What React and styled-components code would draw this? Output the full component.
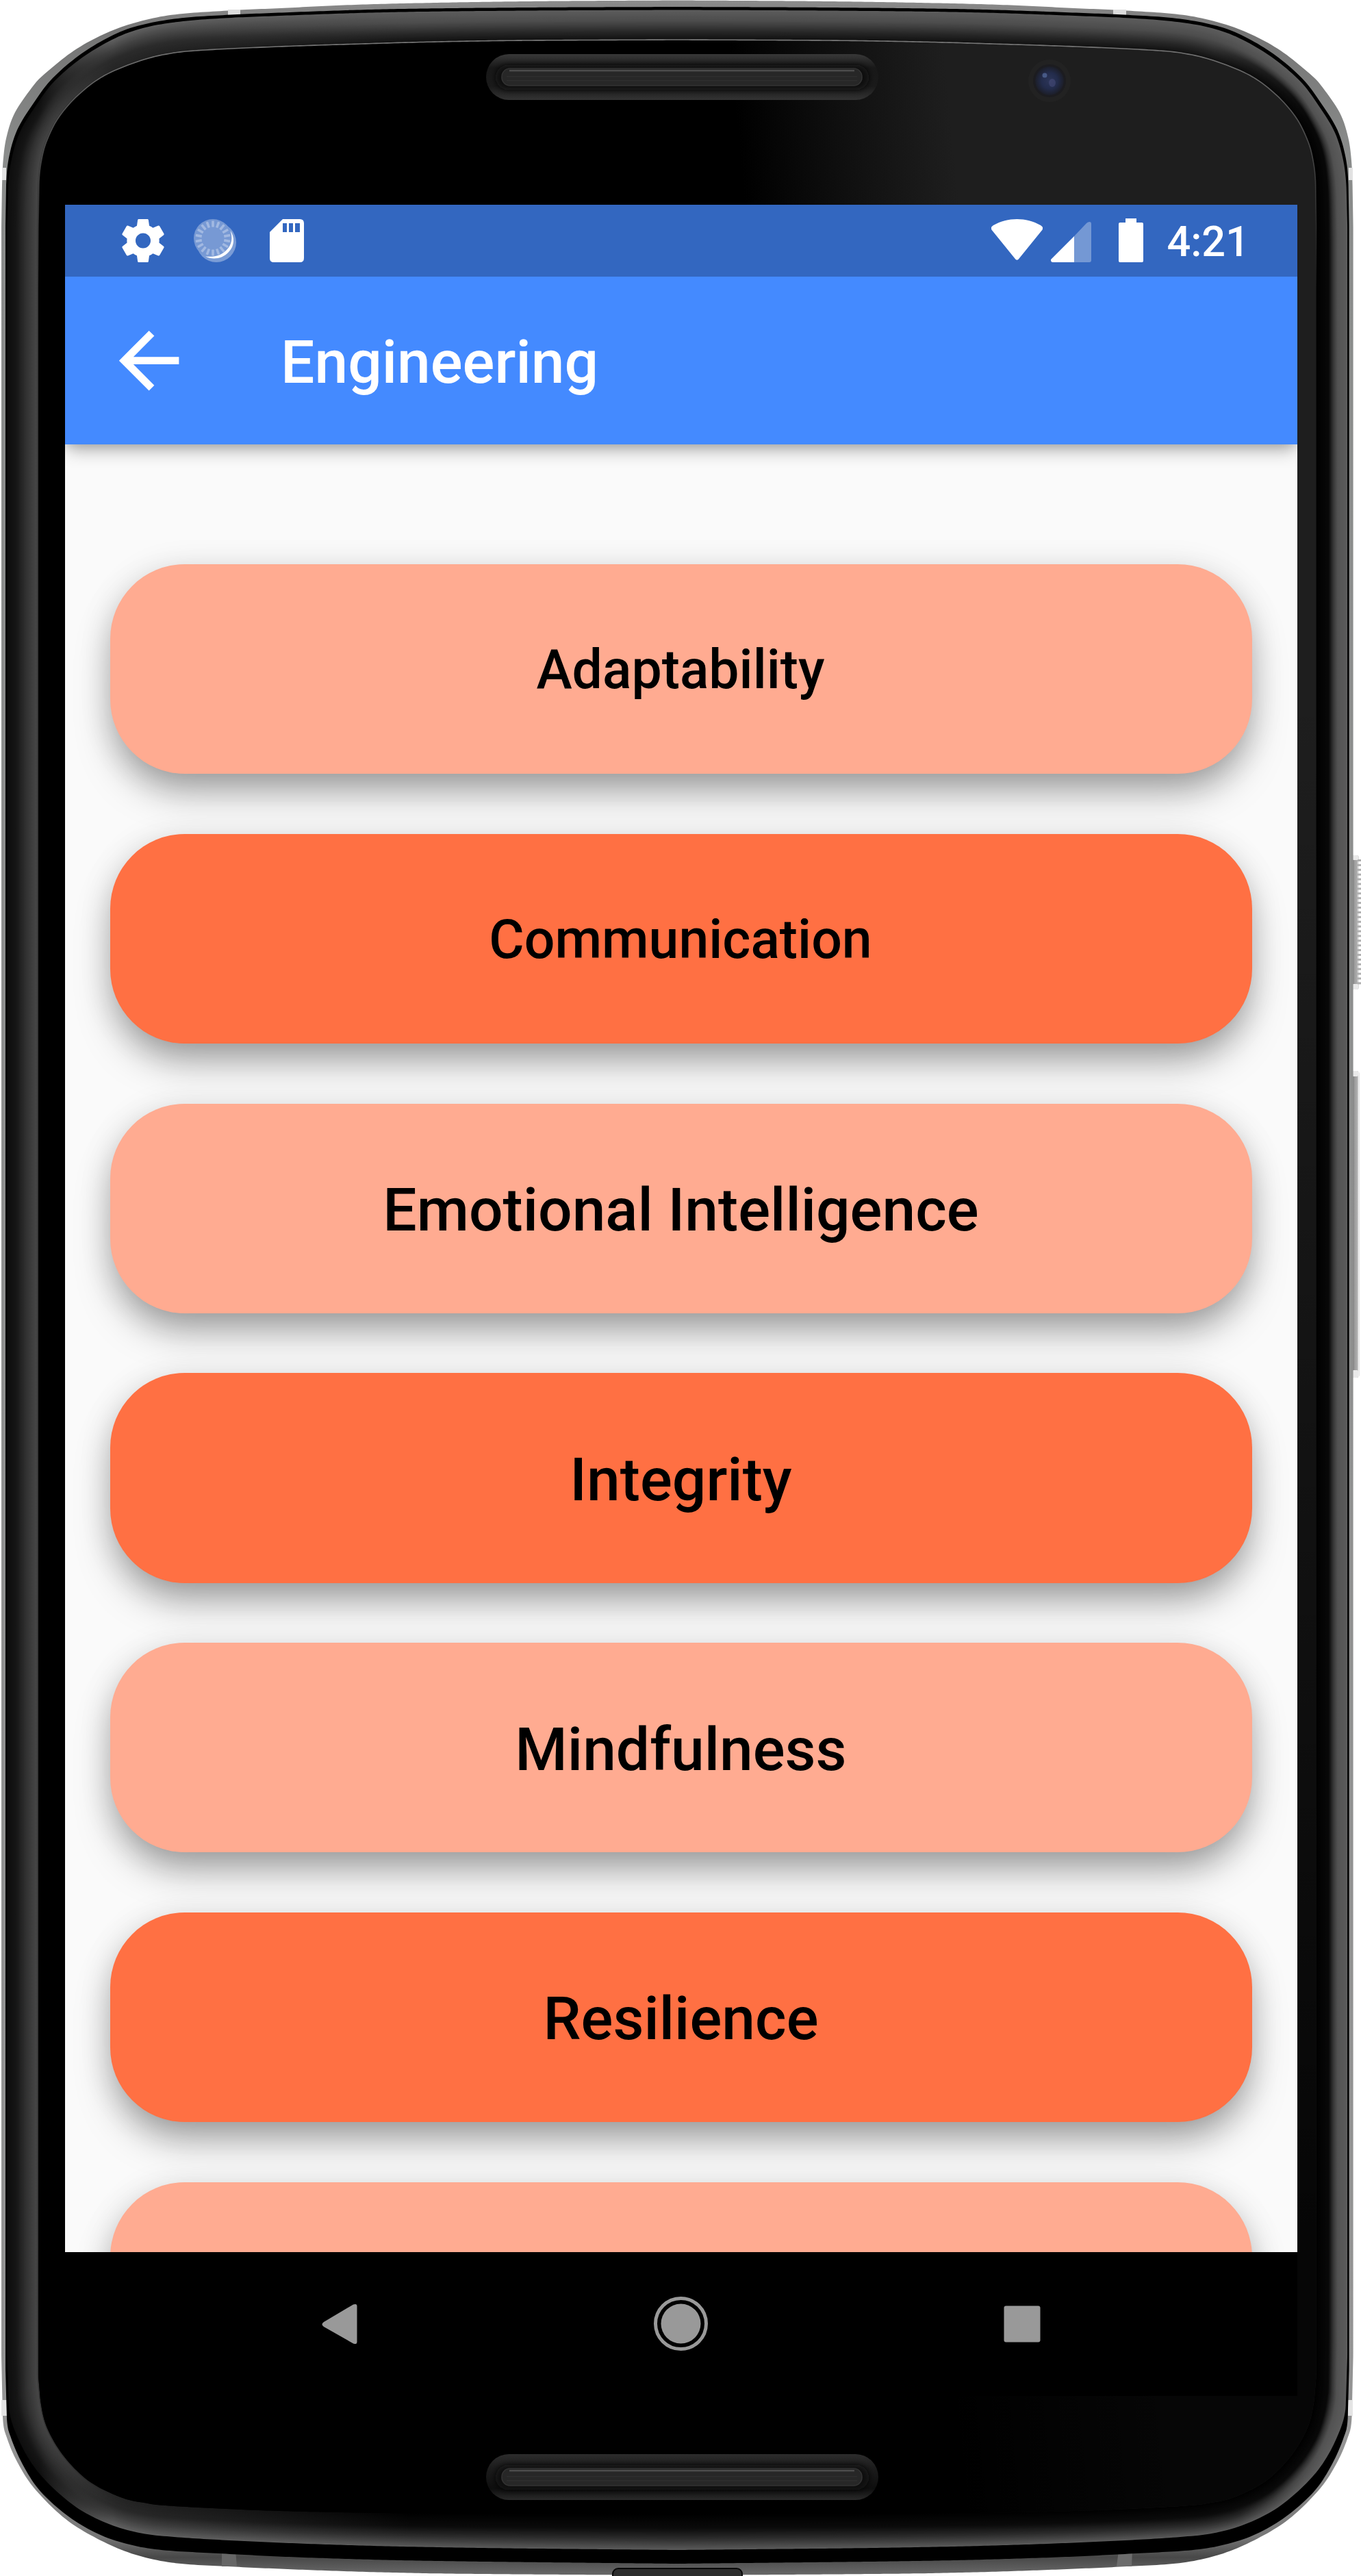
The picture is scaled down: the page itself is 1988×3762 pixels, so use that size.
import React from "react";
import styled, { createGlobalStyle } from "styled-components";

const GlobalStyle = createGlobalStyle`
  body { margin: 0; background: #fff; }
  * { box-sizing: border-box; }
`;

/* ---------- geometry of the handset ---------- */

const CX = 989.3;

const contours = {
  rim: {
    top: [[CX, 0.5], [765, 2], [548, 6], [408, 12], [332, 15.5], [249, 22], [191, 35], [147, 52], [105, 76], [64, 109], [48, 126], [22, 164], [10, 198], [5, 230], [3, 270], [2, 330], [2, 1881]],
    bottom: [[2, 1881], [2, 3440], [4, 3530], [10, 3560], [26, 3597], [51, 3635], [96, 3679], [147, 3710], [198, 3731], [255, 3743], [332, 3748], [446, 3753], [574, 3757], [702, 3759], [CX, 3761]],
  },
  groove: {
    top: [[CX, 10], [770, 11], [561, 13.5], [383, 19.5], [319, 22.5], [268, 26], [217, 34], [172, 48], [121, 77], [77, 114], [48, 152], [25, 190], [13, 230], [9, 270], [8, 330], [8, 1881]],
    bottom: [[8, 1881], [8, 3460], [10, 3533], [16, 3560], [32, 3597], [57, 3636], [96, 3672], [140, 3699], [185, 3715], [236, 3724], [319, 3729], [446, 3735], [638, 3740], [CX, 3744]],
  },
  bevel: {
    top: [[CX, 14.5], [770, 15.5], [561, 18], [383, 24], [319, 27], [268, 31], [217, 39], [172, 54], [123, 82], [80, 118], [52, 155], [29, 193], [17, 232], [12, 272], [10.5, 330], [10.5, 1881]],
    bottom: [[10.5, 1881], [10.5, 3440], [13, 3517], [26, 3560], [48, 3600], [77, 3633], [115, 3664], [159, 3686], [204, 3699], [255, 3705], [357, 3711], [510, 3717], [702, 3721], [CX, 3724]],
  },
  glass: {
    top: [[CX, 58], [770, 59], [638, 61], [529, 64], [408, 68], [300, 73], [249, 78], [204, 89], [153, 110], [115, 138], [86, 171], [69, 204], [61, 232], [57, 266], [56, 330], [56, 1881]],
    bottom: [[56, 1881], [56, 3470], [59, 3505], [67, 3541], [86, 3577], [112, 3608], [140, 3630], [179, 3648], [210, 3655], [255, 3660], [408, 3667], [638, 3671], [CX, 3673]],
  },
};

function resample(points, count) {
  const lengths = [0];
  for (let i = 1; i < points.length; i++) {
    lengths.push(lengths[i - 1] + Math.hypot(points[i][0] - points[i - 1][0], points[i][1] - points[i - 1][1]));
  }
  const total = lengths[lengths.length - 1];
  const out = [];
  let k = 1;
  for (let i = 0; i <= count; i++) {
    const d = (total * i) / count;
    while (k < points.length - 1 && lengths[k] < d) k++;
    const f = (d - lengths[k - 1]) / (lengths[k] - lengths[k - 1]);
    out.push([
      points[k - 1][0] + (points[k][0] - points[k - 1][0]) * f,
      points[k - 1][1] + (points[k][1] - points[k - 1][1]) * f,
    ]);
  }
  return out;
}

/* Rounds a list of points off, leaving the long straight sides straight. */
function smooth(points) {
  const out = [points[0]];
  const far = (a, b) => Math.hypot(a[0] - b[0], a[1] - b[1]) > 400;
  for (let i = 0; i < points.length - 1; i++) {
    const p1 = points[i];
    const p2 = points[i + 1];
    const p0 = points[i - 1] || p1;
    const p3 = points[i + 2] || p2;
    const straight = far(p1, p2) || far(p0, p1) || far(p2, p3);
    for (let s = 1; s <= 8; s++) {
      const t = s / 8;
      const at = (a, b, c, d) =>
        straight
          ? b + (c - b) * t
          : 0.5 * (2 * b + (c - a) * t + (2 * a - 5 * b + 4 * c - d) * t * t + (3 * b - a - 3 * c + d) * t * t * t);
      out.push([at(p0[0], p1[0], p2[0], p3[0]), at(p0[1], p1[1], p2[1], p3[1])]);
    }
  }
  return out;
}

function prepare({ top, bottom }) {
  return [...resample(smooth(top), 500), ...resample(smooth(bottom), 500)];
}

function closed(half) {
  const f = ([x, y]) => `${x.toFixed(2)} ${y.toFixed(2)}`;
  const right = half.map(([x, y]) => [2 * CX - x, y]).reverse();
  return `M${half.map(f).join("L")}L${right.map(f).join("L")}Z`;
}

const halves = Object.fromEntries(Object.entries(contours).map(([k, v]) => [k, prepare(v)]));
const outline = Object.fromEntries(Object.entries(halves).map(([k, v]) => [k, closed(v)]));

const ramp = (stops, t) => {
  for (let i = 1; i < stops.length; i++) {
    if (t <= stops[i][0]) {
      const f = (t - stops[i - 1][0]) / (stops[i][0] - stops[i - 1][0]);
      return Math.round(stops[i - 1][1] + (stops[i][1] - stops[i - 1][1]) * f);
    }
  }
  return stops[stops.length - 1][1];
};
const grey = (v) => `rgb(${v},${v},${v})`;

const LEFT = [[0, 14], [0.25, 20], [0.6, 50], [0.92, 70], [1, 40]];
const CORNER = [[0, 95], [0.3, 66], [0.6, 42], [1, 36]];
const MIDDLE = [[0, 92], [0.35, 76], [0.7, 40], [1, 14]];
const RIGHT = [[0, 92], [0.3, 82], [0.45, 50], [0.58, 8], [1, 0]];
const BASE = [[0, 88], [0.3, 44], [0.6, 10], [1, 0]];

const STEPS = 26;
const rings = Array.from({ length: STEPS }, (_, i) => {
  const t = i / STEPS;
  const half = halves.bevel.map(([x, y], k) => [
    x + (halves.glass[k][0] - x) * t,
    y + (halves.glass[k][1] - y) * t,
  ]);
  return {
    d: closed(half),
    left: grey(ramp(LEFT, t)),
    corner: grey(ramp(CORNER, t)),
    middle: grey(ramp(MIDDLE, t)),
    right: grey(ramp(RIGHT, t)),
    base: grey(ramp(BASE, t)),
  };
});

function Grille({ y, id }) {
  return (
    <g>
      <rect x="710" y={y} width="573" height="67" rx="33.5" fill={`url(#${id})`} />
      <rect x="724" y={y + 16} width="545" height="36" rx="18" fill="#111" filter="url(#soften)" />
      <rect x="733" y={y + 21} width="526" height="25" rx="12" fill="#272727" stroke="#333" strokeWidth="1.6" />
      <rect x="744" y={y + 23} width="504" height="2.4" fill="#4c4c4c" />
      <rect x="740" y={y + 32} width="512" height="1.5" fill="#2e2e2e" />
      <rect x="740" y={y + 38} width="512" height="1.5" fill="#2e2e2e" />
    </g>
  );
}

function Handset() {
  const teeth = Array.from({ length: 27 }, (_, i) => 1255 + i * 6.9);
  return (
    <Shell viewBox="0 0 1988 3762" aria-hidden="true">
      <defs>
        <linearGradient id="metal" x1="0" y1="0" x2="0" y2="1">
          <stop offset="0" stopColor="#8c8c8c" />
          <stop offset="0.012" stopColor="#747474" />
          <stop offset="0.06" stopColor="#8a8c8b" />
          <stop offset="0.95" stopColor="#949494" />
          <stop offset="0.985" stopColor="#777" />
          <stop offset="0.993" stopColor="#484848" />
          <stop offset="1" stopColor="#6a6a6a" />
        </linearGradient>
        {rings.map((r, i) => (
          <React.Fragment key={i}>
            <linearGradient id={`u${i}`} gradientUnits="userSpaceOnUse" x1="8" y1="0" x2="1970" y2="0">
              <stop offset="0" stopColor={r.left} />
              <stop offset="0.025" stopColor={r.left} />
              <stop offset="0.08" stopColor={r.corner} />
              <stop offset="0.3" stopColor={r.middle} />
              <stop offset="0.9" stopColor={r.middle} />
              <stop offset="0.97" stopColor={r.right} />
              <stop offset="1" stopColor={r.right} />
            </linearGradient>
            <linearGradient id={`l${i}`} gradientUnits="userSpaceOnUse" x1="8" y1="0" x2="1970" y2="0">
              <stop offset="0" stopColor={r.left} />
              <stop offset="0.025" stopColor={r.left} />
              <stop offset="0.08" stopColor={r.corner} />
              <stop offset="0.3" stopColor={r.base} />
              <stop offset="0.92" stopColor={r.base} />
              <stop offset="0.98" stopColor={r.right} />
              <stop offset="1" stopColor={r.right} />
            </linearGradient>
          </React.Fragment>
        ))}
        <linearGradient id="glare" gradientUnits="userSpaceOnUse" x1="1090" y1="320" x2="1400" y2="290">
          <stop offset="0" stopColor="#000" />
          <stop offset="0.5" stopColor="#101010" />
          <stop offset="1" stopColor="#1e1e1e" />
        </linearGradient>
        <linearGradient id="fade" gradientUnits="userSpaceOnUse" x1="0" y1="1000" x2="0" y2="3250">
          <stop offset="0" stopColor="#000" stopOpacity="0" />
          <stop offset="1" stopColor="#000" stopOpacity="0.8" />
        </linearGradient>
        <linearGradient id="edge" gradientUnits="userSpaceOnUse" x1="0" y1="55" x2="0" y2="420">
          <stop offset="0" stopColor="#7a7a7a" />
          <stop offset="0.3" stopColor="#555" />
          <stop offset="1" stopColor="#555" stopOpacity="0" />
        </linearGradient>
        <linearGradient id="earpiece" x1="0" y1="0" x2="0" y2="1">
          <stop offset="0" stopColor="#383838" />
          <stop offset="0.3" stopColor="#181818" />
          <stop offset="0.7" stopColor="#1a1a1a" />
          <stop offset="1" stopColor="#333" />
        </linearGradient>
        <linearGradient id="loudspeaker" x1="0" y1="0" x2="0" y2="1">
          <stop offset="0" stopColor="#2c2c2c" />
          <stop offset="0.3" stopColor="#1c1c1c" />
          <stop offset="0.75" stopColor="#0e0e0e" />
          <stop offset="1" stopColor="#2a2a2a" />
        </linearGradient>
        <linearGradient id="key" x1="0" y1="0" x2="1" y2="0">
          <stop offset="0" stopColor="#6a6a6a" />
          <stop offset="0.35" stopColor="#9c9c9c" />
          <stop offset="0.75" stopColor="#b0b0b0" />
          <stop offset="0.9" stopColor="#f4f4f4" />
          <stop offset="1" stopColor="#c4c4c4" />
        </linearGradient>
        <radialGradient id="lens">
          <stop offset="0" stopColor="#2c3558" />
          <stop offset="0.55" stopColor="#232c4c" />
          <stop offset="1" stopColor="#1c1e28" />
        </radialGradient>
        <filter id="soften" x="-5%" y="-60%" width="110%" height="220%">
          <feGaussianBlur stdDeviation="4" />
        </filter>
      </defs>

      <rect x="1975" y="1249" width="10" height="196" rx="3" fill="url(#key)" />
      {teeth.map((y) => (
        <rect key={y} x="1983" y={y} width="5" height="3" fill="#b0b0b0" />
      ))}
      <rect x="1975" y="1249" width="9" height="7" rx="2" fill="#e9e9e9" />
      <rect x="1975" y="1437" width="9" height="8" rx="2" fill="#e9e9e9" />
      <rect x="1975" y="1564" width="10.5" height="448" rx="4" fill="url(#key)" />
      <rect x="1975" y="1564" width="9" height="8" rx="2" fill="#e9e9e9" />
      <rect x="1975" y="2001" width="9" height="11" rx="2" fill="#e9e9e9" />

      <path d={outline.rim} fill="url(#metal)" />
      <rect x="333" y="14" width="18" height="9" fill="#dcdcdc" />
      <rect x="1626" y="14" width="19" height="9" fill="#dcdcdc" />
      <rect x="3" y="245" width="6" height="18" fill="#e2e2e2" />
      <rect x="1970" y="245" width="6" height="18" fill="#e2e2e2" />
      <rect x="2" y="3505" width="8" height="23" fill="#e4e4e4" />
      <rect x="1969" y="3505" width="7" height="23" fill="#e4e4e4" />
      <path d="M324 3725H344L346 3748H324Z" fill="#666" />
      <path d="M1634 3725H1654L1653 3748H1631Z" fill="#6c6c6c" />
      <rect x="895" y="3751" width="189" height="22" rx="8" fill="#2e2e2e" stroke="#080808" strokeWidth="2" />

      <path d={outline.groove} fill="#000" />
      <svg x="0" y="0" width="1988" height="1881" viewBox="0 0 1988 1881">
        {rings.map((r, i) => (
          <path key={i} d={r.d} fill={`url(#u${i})`} />
        ))}
      </svg>
      <svg x="0" y="1881" width="1988" height="1881" viewBox="0 1881 1988 1881">
        {rings.map((r, i) => (
          <path key={i} d={r.d} fill={`url(#l${i})`} />
        ))}
      </svg>
      <path d={outline.glass} fill="url(#glare)" />
      <path d={outline.glass} fill="url(#fade)" />
      <path d={outline.glass} fill="none" stroke="url(#edge)" strokeWidth="1.6" />

      <Grille y={79} id="earpiece" />
      <Grille y={3584} id="loudspeaker" />

      <circle cx="1533" cy="118" r="31" fill="#222" />
      <circle cx="1533" cy="118" r="24" fill="#1c1c20" />
      <circle cx="1533" cy="118" r="21" fill="url(#lens)" />
      <circle cx="1526" cy="110" r="3.5" fill="#5f78ad" opacity="0.6" />
      <ellipse cx="1537" cy="121" rx="5" ry="6" fill="#4f5484" opacity="0.45" />
    </Shell>
  );
}

/* ---------- layout ---------- */

const Device = styled.main`
  position: relative;
  width: 1988px;
  height: 3762px;
  padding: 299px 93px 263px 95px;
  overflow: hidden;
`;

const Shell = styled.svg`
  position: absolute;
  inset: 0;
  width: 1988px;
  height: 3762px;
`;

const Screen = styled.section`
  position: relative;
  display: flex;
  flex-direction: column;
  width: 1800px;
  height: 3200px;
  background: #fafafa;
  font-family: Roboto, "Liberation Sans", sans-serif;
  font-weight: 500;
  overflow: hidden;
`;

const StatusBar = styled.header`
  flex: none;
  display: flex;
  justify-content: space-between;
  align-items: center;
  height: 105px;
  padding: 0 70px 0 83px;
  background: #3367c0;
  color: #fff;
  position: relative;
  z-index: 2;
`;

const StatusGroup = styled.div`
  display: flex;
  align-items: center;
`;

const StatusIcon = styled.svg`
  display: block;
  height: 65px;
  width: ${(p) => p.$w}px;
  margin-right: ${(p) => p.$gap || 0}px;
  fill: currentColor;
`;

const Clock = styled.time`
  padding-top: 3px;
  font-size: 61.25px;
  line-height: 65px;
`;

const AppBar = styled.div`
  flex: none;
  display: flex;
  align-items: center;
  height: 245px;
  padding-left: 57px;
  background: #448aff;
  color: #fff;
  position: relative;
  z-index: 1;
  box-shadow: 0 12px 24px -4px rgba(0, 0, 0, 0.3), 0 2px 14px rgba(0, 0, 0, 0.12);
`;

const BackIcon = styled.svg`
  width: 131.25px;
  height: 131.25px;
  margin-right: 126.75px;
  fill: currentColor;
`;

const Title = styled.h1`
  margin: 0;
  padding-top: 6px;
  font-size: 87.5px;
  font-weight: 500;
  line-height: 1.2;
`;

const SkillList = styled.div`
  flex: 1;
  min-height: 0;
  display: flex;
  flex-direction: column;
  gap: 87.5px;
  padding: 175px 65.6px 0;
  overflow: hidden;
`;

const SkillButton = styled.button`
  flex: none;
  height: 306.25px;
  padding: ${(p) => (p.$small ? "3px 2px 0 0" : "6px 1px 0 0")};
  border: 0;
  border-radius: 109px;
  background: ${(p) => (p.$strong ? "#ff7043" : "#ffab91")};
  color: #000;
  font-family: inherit;
  font-weight: 500;
  font-size: ${(p) => (p.$small ? 78.75 : 87.5)}px;
  line-height: 1.2;
  box-shadow: 0 32px 56px -8px rgba(0, 0, 0, 0.35), 0 6px 48px rgba(0, 0, 0, 0.12);
`;

const NavBar = styled.nav`
  flex: none;
  display: flex;
  justify-content: center;
  align-items: center;
  gap: 418px;
  height: 210px;
  background: #000;
`;

const NavIcon = styled.svg`
  display: block;
  width: 80px;
  height: 80px;
  fill: #999;
`;

const skills = [
  { name: "Adaptability", small: true },
  { name: "Communication", small: true },
  { name: "Emotional Intelligence" },
  { name: "Integrity" },
  { name: "Mindfulness" },
  { name: "Resilience" },
  { name: "" },
];

export default function App() {
  return (
    <>
      <GlobalStyle />
      <Device>
        <Handset />
        <Screen>
          <StatusBar>
            <StatusGroup>
              <StatusIcon $w={62} $gap={43} viewBox="178 319 62 65">
                <path
                  transform="translate(171.2 313.7) scale(3.15)"
                  d="M19.43 12.98c.04-.32.07-.64.07-.98s-.03-.66-.07-.98l2.11-1.65c.19-.15.24-.42.12-.64l-2-3.46c-.12-.22-.39-.3-.61-.22l-2.49 1c-.52-.4-1.08-.73-1.69-.98l-.38-2.65C14.46 2.18 14.25 2 14 2h-4c-.25 0-.46.18-.49.42l-.38 2.65c-.61.25-1.17.59-1.69.98l-2.49-1c-.23-.09-.49 0-.61.22l-2 3.46c-.13.22-.07.49.12.64l2.11 1.65c-.04.32-.07.65-.07.98s.03.66.07.98l-2.11 1.65c-.19.15-.24.42-.12.64l2 3.46c.12.22.39.3.61.22l2.49-1c.52.4 1.08.73 1.69.98l.38 2.65c.03.24.24.42.49.42h4c.25 0 .46-.18.49-.42l.38-2.65c.61-.25 1.17-.59 1.69-.98l2.49 1c.23.09.49 0 .61-.22l2-3.46c.12-.22.07-.49-.12-.64l-2.11-1.65zM12 15.5c-1.93 0-3.5-1.57-3.5-3.5s1.57-3.5 3.5-3.5 3.5 1.57 3.5 3.5-1.57 3.5-3.5 3.5z"
                />
              </StatusIcon>
              <StatusIcon $w={62} $gap={49} viewBox="283 319 62 65">
                <circle cx="316" cy="354" r="29" opacity="0.35" />
                <circle cx="311" cy="348" r="28" fill="#7799d4" />
                {Array.from({ length: 18 }, (_, i) => (
                  <rect
                    key={i}
                    x="309.2"
                    y="322.5"
                    width="3.6"
                    height="9"
                    opacity="0.32"
                    transform={`rotate(${i * 20} 311 348)`}
                  />
                ))}
                <path d="M336.500 337C343 346 343 359 334 368C325 378 311 380 300 374.500C313 376 324 373 331 365C339 357 340 347 336.500 337Z" />
              </StatusIcon>
              <StatusIcon $w={50} viewBox="394 319 50 65">
                <path
                  fillRule="evenodd"
                  d="M413 320H438Q444 320 444 326V377Q444 383 438 383H400Q394 383 394 377V339ZM413 326V339H419V326ZM422 326V339H428V326ZM431 326V339H438V326Z"
                />
              </StatusIcon>
            </StatusGroup>
            <StatusGroup>
              <StatusIcon $w={75} $gap={12} viewBox="1448 319 75 65">
                <path d="M1450 337.500C1446 333 1448 331 1451 329C1472 317 1499 317 1520 329C1523 331 1525 333 1521 337.500L1489 377Q1485.500 382.500 1482 377Z" />
              </StatusIcon>
              <StatusIcon $w={59} $gap={40} viewBox="1535 319 59 65">
                <path
                  opacity="0.32"
                  d="M1569 345L1587 326Q1589 324 1591.500 324Q1594 324 1594 327V380Q1594 383 1591 383H1569Z"
                />
                <path d="M1569 345V383H1538Q1535 383 1535 380V379Z" />
              </StatusIcon>
              <StatusIcon $w={36} $gap={34} viewBox="1634 319 36 65">
                <path d="M1644 319H1660V325H1668Q1670 325 1670 327V381Q1670 383 1668 383H1636Q1634 383 1634 381V327Q1634 325 1636 325H1644Z" />
              </StatusIcon>
              <Clock>4:21</Clock>
            </StatusGroup>
          </StatusBar>

          <AppBar>
            <BackIcon viewBox="0 0 24 24">
              <path d="M20 11H7.830l5.590-5.590L12 4l-8 8 8 8 1.410-1.410L7.830 13H20v-2z" />
            </BackIcon>
            <Title>Engineering</Title>
          </AppBar>

          <SkillList>
            {skills.map((s, i) => (
              <SkillButton key={i} $small={s.small} $strong={i % 2 === 1}>
                {s.name}
              </SkillButton>
            ))}
          </SkillList>

          <NavBar>
            <NavIcon viewBox="0 0 80 80">
              <path d="M16 37L59 11.500Q64.500 9.500 64.500 14V66Q64.500 70.500 59 68.500L16 44Q11 40.500 16 37Z" />
            </NavIcon>
            <NavIcon viewBox="0 0 80 80">
              <circle cx="39.500" cy="39.500" r="37" fill="none" stroke="#999" strokeWidth="5" />
              <circle cx="39.500" cy="39.500" r="29" />
            </NavIcon>
            <NavIcon viewBox="0 0 80 80">
              <rect x="13.500" y="13.500" width="53" height="53" rx="3" />
            </NavIcon>
          </NavBar>
        </Screen>
      </Device>
    </>
  );
}
